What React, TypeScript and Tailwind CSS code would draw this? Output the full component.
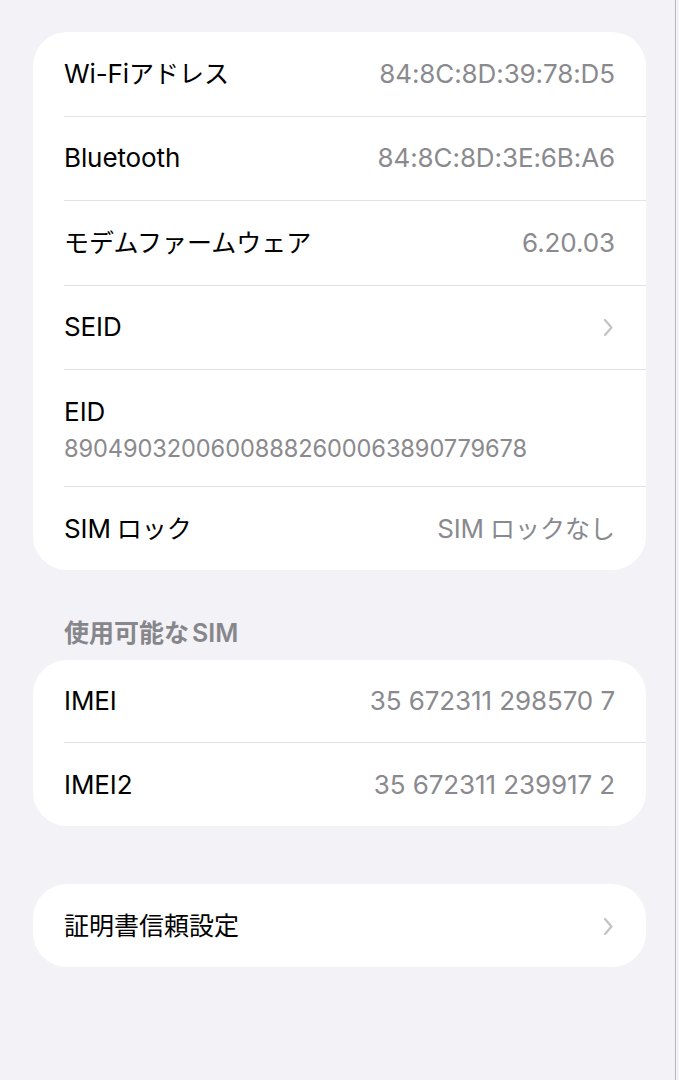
import React from "react";

const font = { fontFamily: 'Inter, "Noto Sans CJK JP", sans-serif' };

function Chevron() {
  return (
    <svg width="11" height="19" viewBox="0 0 11 19" fill="none" className="shrink-0">
      <path d="M2 2 L8.5 9.5 L2 17" stroke="#c4c4c7" strokeWidth="2.3" strokeLinecap="round" strokeLinejoin="round" />
    </svg>
  );
}

function L({ children }: { children: React.ReactNode }) {
  return <span className="text-[26px] tracking-[-0.1px]">{children}</span>;
}
function J({ children }: { children: React.ReactNode }) {
  return <span className="text-[25px]">{children}</span>;
}

function Row({
  label,
  value,
  chevron,
  last,
  short,
}: {
  label: React.ReactNode;
  value?: React.ReactNode;
  chevron?: boolean;
  last?: boolean;
  short?: boolean;
}) {
  return (
    <div className="pl-[31px]">
      <div
        className={`${short ? "h-[83px]" : "h-[84.5px]"} pt-[3px] pr-[31px] flex items-center justify-between ${
          last ? "" : "border-b border-[#e2e2e5]"
        }`}
      >
        <span className="text-black leading-[32px] whitespace-nowrap">{label}</span>
        {value && <span className="text-[#8a8a8e] leading-[32px] whitespace-nowrap">{value}</span>}
        {chevron && (
          <span className="mr-[1px] -mt-[2px]">
            <Chevron />
          </span>
        )}
      </div>
    </div>
  );
}

export default function App() {
  return (
    <div className="flex w-[679px] min-h-[1080px] bg-[#f2f2f7]" style={font}>
      <div className="w-[675px] pl-[33px] pt-[32px] pr-[29px]">
        <div className="bg-white rounded-[34px] overflow-hidden">
          <Row label={<><L>Wi-Fi</L><J>アドレス</J></>} value={<L>84:8C:8D:39:78:D5</L>} />
          <Row label={<L>Bluetooth</L>} value={<L>84:8C:8D:3E:6B:A6</L>} />
          <Row label={<J>モデムファームウェア</J>} value={<L>6.20.03</L>} />
          <Row label={<L>SEID</L>} chevron />
          <div className="pl-[31px]">
            <div className="h-[117px] pt-[5px] pr-[31px] border-b border-[#e2e2e5] flex flex-col justify-center">
              <span className="text-[26px] text-black leading-[30px]">EID</span>
              <span className="text-[23.6px] text-[#8a8a8e] leading-[30px] mt-[7px] tracking-[-0.1px]">
                89049032006008882600063890779678
              </span>
            </div>
          </div>
          <Row
            label={<><L>SIM</L><J><span className="ml-[6px]">ロック</span></J></>}
            value={<><L>SIM</L><J><span className="ml-[6px]">ロックなし</span></J></>}
            last
            short
          />
        </div>

        <div className="pl-[31px] pt-[47px] pb-[11px] text-[25px] font-semibold text-[#86868b] leading-[32px]">
          使用可能な<span className="ml-[3px]">SIM</span>
        </div>

        <div className="bg-white rounded-[34px] overflow-hidden">
          <Row label={<L>IMEI</L>} value={<L>35 672311 298570 7</L>} short />
          <Row label={<L>IMEI2</L>} value={<L>35 672311 239917 2</L>} last short />
        </div>

        <div className="bg-white rounded-[34px] overflow-hidden mt-[58px]">
          <Row label={<J>証明書信頼設定</J>} chevron last short />
        </div>
      </div>
      <div className="w-[1px] bg-[#b8b8bc]" />
      <div className="flex-1 bg-[#f4f4f8]" />
    </div>
  );
}
